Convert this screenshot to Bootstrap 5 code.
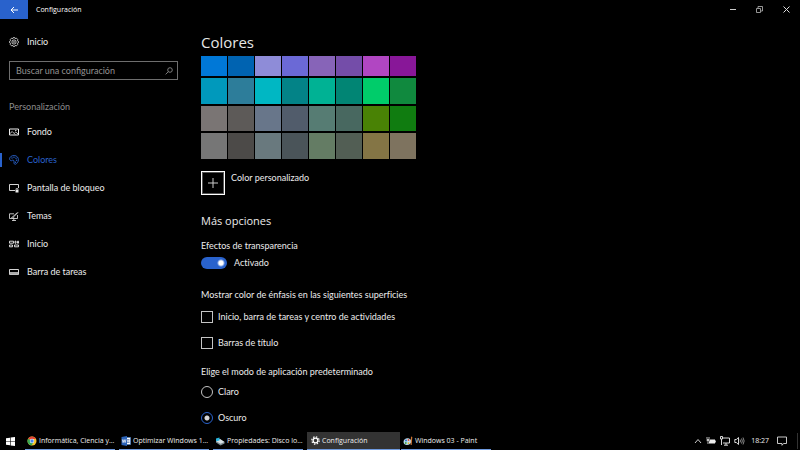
<!DOCTYPE html>
<html lang="es">
<head>
<meta charset="utf-8">
<meta name="viewport" content="width=device-width, initial-scale=1">
<title>Configuración</title>
<link href="https://cdn.jsdelivr.net/npm/bootstrap@5.3.0/dist/css/bootstrap.min.css" rel="stylesheet">
<style>
:root { --accent: #2962cc; }
body { font-family: Lato, "Open Sans", sans-serif; font-size: 9px; line-height: 16px; font-variant-ligatures: none; background: #000; color: #ececec; }
button { color: inherit; background: none; border: 0; padding: 0; }
svg { display: block; flex: none; fill: none; stroke: currentColor; }
svg.solid { stroke: none; }
.titlebar { height: 19px; font-family: "Open Sans", sans-serif; font-size: 7px; color: #fff; }
.back { width: 28px; height: 19px; background: var(--accent); }
.caption-btn { width: 27px; height: 19px; }
.sidebar { width: 190px; padding-top: 9px; }
.side-link { height: 28px; padding-left: 9px; gap: 8px; color: #ececec; text-decoration: none; }
.side-link.current { color: var(--accent); background: linear-gradient(var(--accent), var(--accent)) left center / 2px 14px no-repeat; }
.search { margin: 5px 12px 0 9px; height: 19px; border: 1px solid #6e6e6e; padding: 0 4px 0 6px; color: #999; }
.search input { background: none; border: 0; outline: 0; padding: 0; color: #ddd; min-width: 0; line-height: 16px; }
.search input::placeholder { color: #929292; opacity: 1; }
.group-title { color: #8c8c8c; margin: 19px 0 3px 9px; font-size: 9px; line-height: 16px; }
.content { padding: 9px 11px 0; }
.page-title { font-family: "Open Sans", sans-serif; font-size: 15px; line-height: 28px; font-weight: 400; margin: 0; color: #e6e6e6; }
.swatches { display: grid; grid-template-columns: repeat(8, 26px); grid-template-rows: 20px 26px 25px 26px; gap: 2px 1px; }
.add { width: 24px; height: 24px; border: 1px solid #fff; outline: 1px solid #555; outline-offset: -2px; }
.custom { margin-top: 12px; gap: 6px; line-height: 14px; }
.sub-title { font-family: "Open Sans", sans-serif; font-size: 11px; line-height: 20px; font-weight: 400; margin: 16px 0 7px; }
.field-title { font-size: 9px; line-height: 16px; margin: 0; float: none; }
.choices { display: flex; flex-direction: column; gap: 10px; }
.surfaces { padding-top: 6px; }
.mode { margin-top: 13px; }
.choice { display: flex; align-items: center; gap: 5px; min-height: 16px; margin: 0; padding: 0; }
.choice .form-check-input { float: none; margin: 0; width: 12px; height: 12px; background-color: #000; border: 1px solid #c4c4c4; }
.choice .form-check-input[type=checkbox] { border-radius: 0; }
.choice .form-check-input[type=radio]:checked { border-color: var(--accent); background: radial-gradient(circle, #d6d6d6 2px, #000 3px); }
.choice.form-switch { gap: 7px; margin-top: 1px; }
.choice.form-switch .form-check-input { width: 26px; border-radius: 6px; border: 0; background: radial-gradient(circle at 20px 6px, #fff 2px, var(--accent) 4px); }
.taskbar { height: 18px; font-family: "Open Sans", sans-serif; font-size: 7px; color: #eee; }
.start { width: 25px; padding-left: 6px; }
.task { width: 90px; height: 18px; gap: 2px; padding: 0 2px; border-bottom: 1px solid #6f9be0; white-space: nowrap; }
.task.current { background: #333; width: 93px; padding-left: 4px; margin-right: -3px; }
.tray { gap: 4px; border-right: 1px solid #333; padding-right: 10px; margin-right: 2px; }
.clock { margin-left: 2px; }
</style>
</head>
<body class="d-flex flex-column vh-100 overflow-hidden">
<header class="titlebar d-flex align-items-center">
  <button class="back d-flex align-items-center justify-content-center" aria-label="Atrás"><svg width="8" height="8"><path d="M8 4H1M4 1L1 4L4 7"/></svg></button>
  <span class="ms-2 me-auto">Configuración</span>
  <button class="caption-btn d-flex align-items-center justify-content-center" aria-label="Minimizar"><svg width="7" height="7"><path d="M1 3.500H7" stroke="#ccc"/></svg></button>
  <button class="caption-btn d-flex align-items-center justify-content-center" aria-label="Restaurar"><svg width="7" height="7"><path d="M.5 2.500h4v4h-4zM2 2V.5h4.500v4.500H5" stroke="#bbb" stroke-width=".8"/></svg></button>
  <button class="caption-btn d-flex align-items-center justify-content-center" aria-label="Cerrar"><svg width="7" height="7"><path d="M.5 .5l6 6M6.500 .5l-6 6" stroke="#ddd"/></svg></button>
</header>

<div class="d-flex flex-grow-1 overflow-hidden">
  <nav class="sidebar flex-shrink-0" aria-label="Configuración">
    <a href="#" class="side-link d-flex align-items-center"><svg width="10" height="10" viewBox="0 0 10 10"><path d="M4.200 .6h1.600l.4 1 1.300-.4 1.200 1.200-.4 1.200 1.100.6v1.600l-1.100.6.4 1.200-1.200 1.200-1.300-.4-.4 1H4.200l-.4-1-1.300.4-1.200-1.200.4-1.200-1.100-.6V4.200l1.100-.6-.4-1.200 1.200-1.200 1.300.4z" stroke-width=".8"/><circle cx="5" cy="5" r="2.100" stroke-width=".8"/><circle cx="5" cy="5" r=".6" stroke-width=".6"/></svg>Inicio</a>
    <div class="search d-flex align-items-center">
      <input class="flex-grow-1" type="text" placeholder="Buscar una configuración" aria-label="Buscar una configuración">
      <svg width="8" height="8"><circle cx="5" cy="3" r="2.300" stroke-width=".8"/><path d="M3.300 4.700L.6 7.400" stroke-width=".8"/></svg>
    </div>
    <h2 class="group-title fw-normal">Personalización</h2>
    <a href="#" class="side-link d-flex align-items-center"><svg width="10" height="8"><path d="M.5 1h9v6h-9z"/><path d="M1 5.500l2.200-2 3 3M5.500 5l1.300-1L9 6" stroke-width=".8"/><path d="M6 2.500h1.500" stroke-width=".8"/></svg>Fondo</a>
    <a href="#" class="side-link current d-flex align-items-center" aria-current="page"><svg width="10" height="10" viewBox="0 0 10 10"><path d="M4.500 5.200C3.600 4.600 2.800 6.200 1.700 5.600 .2 4.800.3 3 1.500 1.800 3.400 0 7 .1 8.500 2c1.300 1.700 1.100 4.200-.2 5.800C7.300 9 6.200 9.700 5.400 9c-1-.9.300-2.900-.9-3.800z" stroke-width=".9"/><g fill="currentColor" stroke="none"><circle cx="3" cy="3" r=".7"/><circle cx="5" cy="2.200" r=".7"/><circle cx="7" cy="3.200" r=".7"/><circle cx="7.500" cy="5.200" r=".7"/><circle cx="6.500" cy="7.200" r=".7"/></g></svg>Colores</a>
    <a href="#" class="side-link d-flex align-items-center"><svg width="10" height="9"><path d="M6 6.500H.5v-6h9V4" stroke-width=".9"/><path d="M6.500 5.800h3v2.700h-3z" fill="currentColor" stroke="none"/><path d="M7.100 6V4.600h1.800V6" stroke-width=".7"/></svg>Pantalla de bloqueo</a>
    <a href="#" class="side-link d-flex align-items-center"><svg width="10" height="9"><path d="M5 1.800H.5v4.700h8V3M3 8.500h4M4.800 6.500v2" stroke-width=".8"/><path d="M9 .5L5 4.500M8.500 0.500L4.500 4M4.600 4c-1 0-.8 1.300-2 1.500 1 .7 2.700.3 2.600-.8" stroke-width=".8"/></svg>Temas</a>
    <a href="#" class="side-link d-flex align-items-center"><svg width="10" height="8"><path d="M.5 1.200h4v2h-4zM6 1.200h1v2H6zM8.500 1.200h1v2h-1zM.5 5h3v1.800h-3zM5.500 5h4v1.800h-4z" stroke-width=".9"/></svg>Inicio</a>
    <a href="#" class="side-link d-flex align-items-center"><svg width="10" height="7"><path d="M.5 .5h9v5h-9z" stroke-width=".9"/><path d="M1 3h8v2.500H1z" fill="#aaa" stroke="none"/></svg>Barra de tareas</a>
  </nav>

  <main class="content flex-grow-1 overflow-hidden">
    <h1 class="page-title">Colores</h1>
    <div class="swatches" id="swatches"></div>
    <div class="custom d-flex align-items-start">
      <button class="add d-flex align-items-center justify-content-center" id="add" aria-labelledby="addText"><svg width="10" height="10"><path d="M5 0v10M0 5h10" stroke="#ccc"/></svg></button>
      <label id="addText" for="add">Color personalizado</label>
    </div>
    <h2 class="sub-title">Más opciones</h2>
    <h3 class="field-title fw-normal">Efectos de transparencia</h3>
    <div class="choice form-check form-switch">
      <input class="form-check-input" type="checkbox" role="switch" id="transp" checked><label for="transp">Activado</label>
    </div>
    <fieldset class="mt-3">
      <legend class="field-title">Mostrar color de énfasis en las siguientes superficies</legend>
      <div class="choices surfaces">
        <div class="choice form-check"><input class="form-check-input" type="checkbox" id="surfStart"><label for="surfStart">Inicio, barra de tareas y centro de actividades</label></div>
        <div class="choice form-check"><input class="form-check-input" type="checkbox" id="surfTitle"><label for="surfTitle">Barras de título</label></div>
      </div>
    </fieldset>
    <fieldset class="mode">
      <legend class="field-title">Elige el modo de aplicación predeterminado</legend>
      <div class="choices pt-1">
        <div class="choice form-check"><input class="form-check-input" type="radio" name="mode" id="light"><label for="light">Claro</label></div>
        <div class="choice form-check"><input class="form-check-input" type="radio" name="mode" id="dark" checked><label for="dark">Oscuro</label></div>
      </div>
    </fieldset>
  </main>
</div>

<footer class="taskbar d-flex align-items-center flex-shrink-0">
  <button class="start" aria-label="Inicio"><svg class="solid" width="9" height="9"><path d="M0 1.300L4 .7V4.200H0zM4.600 .6L9 0V4.200H4.600zM0 4.800H4V8.300L0 7.700zM4.600 4.800H9V9L4.600 8.400z" fill="#fff"/></svg></button>
  <div class="d-flex gap-1 me-auto">
    <button class="task d-flex align-items-center"><svg class="solid" width="10" height="10"><circle cx="5" cy="5" r="4.500" fill="#f4c430"/><path d="M5 5L1.100 2.700A4.500 4.500 0 0 1 9.100 3H5z" fill="#e04436"/><path d="M5 5L1.100 2.700A4.500 4.500 0 0 0 4.600 9.500L6.500 6z" fill="#38a853"/><circle cx="5" cy="5" r="2.200" fill="#fff"/><circle cx="5" cy="5" r="1.700" fill="#4688f1"/></svg><span>Informática, Ciencia y...</span></button>
    <button class="task d-flex align-items-center"><svg width="10" height="10"><path d="M5 1.500h4.500v7H5z" fill="#fff" stroke="#4a7fc4" stroke-width=".7"/><path d="M6 3.500h2.500M6 5h2.500M6 6.500h2.500" stroke="#2b579a" stroke-width=".6"/><path d="M.5 1L6 0v10L.5 9z" fill="#2b63b8" stroke="none"/><path d="M1.300 3.400l.8 3.200 1-3 1 3 .9-3.300" stroke="#fff" stroke-width=".7"/></svg><span>Optimizar Windows 1...</span></button>
    <button class="task d-flex align-items-center"><svg class="solid" width="10" height="10"><path d="M1 5l4-2 4.500 3v1.500L5.500 9.500 1 6.500z" fill="#7d8c92"/><path d="M1 5l4-2 4.500 3-4 1.800z" fill="#d8e2e5"/><path d="M1 2.500L4.500 1.500V4.500L1 5.200z" fill="#28b4dd"/></svg><span>Propiedades: Disco lo...</span></button>
    <button class="task current d-flex align-items-center"><svg width="9" height="9"><circle cx="4.500" cy="4.500" r="2.400" stroke="#fff" stroke-width="1.300"/><circle cx="4.500" cy="4.500" r="3.700" stroke="#fff" stroke-width="1.200" stroke-dasharray="1.500 1.400"/></svg><span>Configuración</span></button>
    <button class="task d-flex align-items-center"><svg class="solid" width="10" height="10"><path d="M.5 6C.5 3 3.500 1.500 6 2.500s3 4 1 5.500-6.500 1.500-6.500-2z" fill="#b9dcee"/><circle cx="3" cy="4.500" r="1" fill="#3576cc"/><circle cx="5.500" cy="4" r=".9" fill="#e94b35"/><circle cx="2.800" cy="7" r=".9" fill="#42a742"/><circle cx="5.500" cy="7.200" r=".9" fill="#f3b62c"/><path d="M8 .5l1.300.5-.6 8H7.600z" fill="#cf7432"/></svg><span>Windows 03 - Paint</span></button>
  </div>
  <div class="tray d-flex align-items-center">
    <button aria-label="Mostrar iconos ocultos"><svg width="8" height="6"><path d="M1 5l3-3.500L7 5" stroke="#ccc"/></svg></button>
    <svg width="10" height="10"><path d="M3 3.500h6v4H3z" fill="#eee" stroke="none"/><path d="M9.500 4.500v2M1 1v2M3 1v2M2 5v3" stroke-width=".8"/><path d="M.5 2.800h3v2.400h-3z" fill="#ddd" stroke="#000" stroke-width=".4"/></svg>
    <svg width="10" height="10"><path d="M3 2h6.500v5H3M6 7v2M4 9.200h4M.5 .5h2v2.500h-2zM1.500 3v6" stroke-width=".9"/></svg>
    <svg width="11" height="10"><path d="M.8 3.500h1.500L4.500 1.500v7l-2.200-2H.8z" stroke-width=".9"/><path d="M6 3.500q1 1.500 0 3M7.500 2.500q1.700 2.500 0 5M9 1.500q2.300 3.500 0 7" stroke="#aaa" stroke-width=".8"/></svg>
    <time class="clock">18:27</time>
    <button class="ms-1" aria-label="Centro de actividades"><svg width="10" height="10"><path d="M.5 1h9v6.500H6.500L5 9.300V7.500H.5z" stroke="#ddd" stroke-width=".9"/></svg></button>
  </div>
</footer>
<script src="https://cdn.jsdelivr.net/npm/bootstrap@5.3.0/dist/js/bootstrap.bundle.min.js"></script>
<script>
const colors = ["#0078d7","#0063b1","#8e8cd8","#6b69d6","#8764b8","#744da9","#b146c2","#881798",
  "#0099bc","#2d7d9a","#00b7c3","#038387","#00b294","#018574","#00cc6a","#10893e",
  "#7a7574","#5d5a58","#68768a","#515c6b","#567c73","#486860","#498205","#107c10",
  "#767676","#4c4a48","#69797e","#4a5459","#647c64","#525e54","#847545","#7e735f"];
const box = document.getElementById("swatches");
colors.forEach(c => {
  const b = document.createElement("button");
  b.style.background = c;
  b.setAttribute("aria-label", c);
  box.append(b);
});
</script>
</body>
</html>
